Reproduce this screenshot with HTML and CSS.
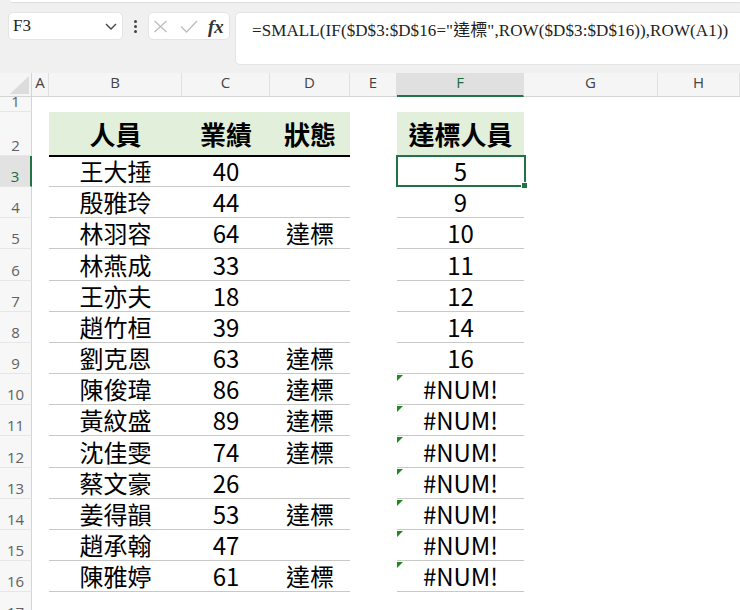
FILE: index.html
```html
<!DOCTYPE html>
<html lang="zh-Hant">
<head>
<meta charset="utf-8">
<title>Sheet</title>
<link rel="stylesheet" href="styles.css">
</head>
<body>
<div class="toolbar">
  <div class="ribbon-edge"></div>
  <div class="bar">
    <div class="namebox">
      <span class="ref">F3</span>
      <svg class="chev" width="12" height="7" viewBox="0 0 12 7"><path d="M1 1l5 5 5-5" fill="none" stroke="#444" stroke-width="1.4"/></svg>
    </div>
    <div class="dots"><i></i><i></i><i></i></div>
    <div class="fxbox">
      <svg width="15" height="13" viewBox="0 0 15 13"><path d="M1.5 1l12 11M13.5 1l-12 11" fill="none" stroke="#bdbdbd" stroke-width="1.3"/></svg>
      <svg width="18" height="13" viewBox="0 0 18 13"><path d="M1 6.5l5.5 5.5L17 1" fill="none" stroke="#bdbdbd" stroke-width="1.3"/></svg>
      <span class="fx">fx</span>
    </div>
    <div class="formula">=SMALL(IF($D$3:$D$16="達標",ROW($D$3:$D$16)),ROW(A1))</div>
  </div>
</div>
<div class="sheet">
  <div class="corner"><svg width="19" height="18" viewBox="0 0 19 18"><polygon points="19,0 19,18 0,18" fill="#dcdcdc"/></svg></div>
  <div class="ch">A</div><div class="ch">B</div><div class="ch">C</div><div class="ch">D</div><div class="ch">E</div><div class="ch on">F</div><div class="ch">G</div><div class="ch">H</div>

  <div class="rh">1</div><div class="c"></div><div class="c"></div><div class="c"></div><div class="c"></div><div class="c"></div><div class="c"></div><div class="c"></div><div class="c"></div>

  <div class="rh">2</div><div class="c"></div><div class="c hd line">人員</div><div class="c hd line">業績</div><div class="c hd line">狀態</div><div class="c"></div><div class="c hd">達標人員</div><div class="c"></div><div class="c"></div>

  <div class="rh on">3</div><div class="c"></div><div class="c dt">王大捶</div><div class="c dt">40</div><div class="c dt"></div><div class="c"></div><div class="c dt sel">5</div><div class="c"></div><div class="c"></div>
  <div class="rh">4</div><div class="c"></div><div class="c dt">殷雅玲</div><div class="c dt">44</div><div class="c dt"></div><div class="c"></div><div class="c dt">9</div><div class="c"></div><div class="c"></div>
  <div class="rh">5</div><div class="c"></div><div class="c dt">林羽容</div><div class="c dt">64</div><div class="c dt">達標</div><div class="c"></div><div class="c dt">10</div><div class="c"></div><div class="c"></div>
  <div class="rh">6</div><div class="c"></div><div class="c dt">林燕成</div><div class="c dt">33</div><div class="c dt"></div><div class="c"></div><div class="c dt">11</div><div class="c"></div><div class="c"></div>
  <div class="rh">7</div><div class="c"></div><div class="c dt">王亦夫</div><div class="c dt">18</div><div class="c dt"></div><div class="c"></div><div class="c dt">12</div><div class="c"></div><div class="c"></div>
  <div class="rh">8</div><div class="c"></div><div class="c dt">趙竹桓</div><div class="c dt">39</div><div class="c dt"></div><div class="c"></div><div class="c dt">14</div><div class="c"></div><div class="c"></div>
  <div class="rh">9</div><div class="c"></div><div class="c dt">劉克恩</div><div class="c dt">63</div><div class="c dt">達標</div><div class="c"></div><div class="c dt">16</div><div class="c"></div><div class="c"></div>
  <div class="rh">10</div><div class="c"></div><div class="c dt">陳俊瑋</div><div class="c dt">86</div><div class="c dt">達標</div><div class="c"></div><div class="c dt err">#NUM!</div><div class="c"></div><div class="c"></div>
  <div class="rh">11</div><div class="c"></div><div class="c dt">黃紋盛</div><div class="c dt">89</div><div class="c dt">達標</div><div class="c"></div><div class="c dt err">#NUM!</div><div class="c"></div><div class="c"></div>
  <div class="rh">12</div><div class="c"></div><div class="c dt">沈佳雯</div><div class="c dt">74</div><div class="c dt">達標</div><div class="c"></div><div class="c dt err">#NUM!</div><div class="c"></div><div class="c"></div>
  <div class="rh">13</div><div class="c"></div><div class="c dt">蔡文豪</div><div class="c dt">26</div><div class="c dt"></div><div class="c"></div><div class="c dt err">#NUM!</div><div class="c"></div><div class="c"></div>
  <div class="rh">14</div><div class="c"></div><div class="c dt">姜得韻</div><div class="c dt">53</div><div class="c dt">達標</div><div class="c"></div><div class="c dt err">#NUM!</div><div class="c"></div><div class="c"></div>
  <div class="rh">15</div><div class="c"></div><div class="c dt">趙承翰</div><div class="c dt">47</div><div class="c dt"></div><div class="c"></div><div class="c dt err">#NUM!</div><div class="c"></div><div class="c"></div>
  <div class="rh">16</div><div class="c"></div><div class="c dt">陳雅婷</div><div class="c dt">61</div><div class="c dt">達標</div><div class="c"></div><div class="c dt err">#NUM!</div><div class="c"></div><div class="c"></div>
  <div class="rh">17</div><div class="c"></div><div class="c"></div><div class="c"></div><div class="c"></div><div class="c"></div><div class="c"></div><div class="c"></div><div class="c"></div>
</div>
</body>
</html>
```

FILE: styles.css
```css
html, body {
  margin: 0;
  padding: 0;
}
body {
  width: 740px;
  height: 610px;
  overflow: hidden;
  background: #f0f0f0;
  font-family: "Noto Sans CJK TC", "Noto Sans", sans-serif;
}

/* ---------- formula bar ---------- */
.toolbar {
  height: 73px;
  background: #f0f0f0;
  display: flex;
  flex-direction: column;
}
.ribbon-edge {
  height: 2px;
  margin-left: 10px;
  background: #fff;
  border-bottom-left-radius: 4px;
  box-shadow: 0 1px 1px rgba(0, 0, 0, 0.08);
}
.bar {
  display: flex;
  align-items: flex-start;
  padding: 10px 0 0 8px;
}
.namebox {
  width: 115px;
  height: 28px;
  box-sizing: border-box;
  background: #fff;
  border: 1px solid #e4e4e4;
  border-radius: 5px;
  display: flex;
  align-items: center;
  justify-content: space-between;
  padding: 0 5px 0 4px;
  font: 17px "Liberation Serif", serif;
  color: #222;
}
.chev {
  margin-top: 1px;
}
.dots {
  width: 25px;
  display: flex;
  flex-direction: column;
  align-items: center;
  gap: 2px;
  padding-top: 8px;
}
.dots i {
  width: 3px;
  height: 3px;
  border-radius: 50%;
  background: #444;
}
.fxbox {
  width: 82px;
  height: 28px;
  box-sizing: border-box;
  background: #fff;
  border: 1px solid #e4e4e4;
  border-radius: 5px;
  display: flex;
  align-items: center;
  padding-left: 4px;
  gap: 12px;
}
.fx {
  margin-left: -2px;
  font: italic 700 19px "Liberation Serif", serif;
  color: #333;
  line-height: 1;
}
.formula {
  flex: 1;
  margin-left: 5px;
  margin-right: -12px;
  height: 53px;
  box-sizing: border-box;
  background: #fff;
  border: 1px solid #e4e4e4;
  border-radius: 5px;
  padding: 3px 0 0 16px;
  font: 17px "Liberation Serif", "Noto Sans CJK TC", serif;
  letter-spacing: 0.1px;
  color: #222;
  white-space: nowrap;
}

/* ---------- sheet ---------- */
.sheet {
  display: grid;
  grid-template-columns: 32px 17px 133px 88px 80px 47px 127px 134px 1fr;
  grid-template-rows: 24px 15px 44px 31px 31px 31px 32px 31px 31px 31px 31px 31px 32px 31px 31px 31px 31px 31px;
  background: #fff;
}
.corner {
  background: #f5f5f5;
  border-right: 1px solid #d4d4d4;
  border-bottom: 1px solid #d4d4d4;
  box-sizing: border-box;
  display: flex;
  justify-content: flex-end;
  align-items: flex-end;
  padding: 0 2px 2px 0;
}
.ch {
  background: #f5f5f5;
  box-sizing: border-box;
  border-right: 1px solid #e0e0e0;
  border-bottom: 1px solid #d4d4d4;
  display: flex;
  justify-content: center;
  align-items: flex-start;
  padding-top: 2px;
  font: 15px/1 "Open Sans", sans-serif;
  color: #444;
}
.ch.on {
  background: #e0e0e0;
  color: #1e6b41;
  border-bottom: 2px solid #217346;
}
.rh {
  background: #f7f7f7;
  box-sizing: border-box;
  border-right: 1px solid #d4d4d4;
  border-bottom: 1px solid #e6e6e6;
  display: flex;
  justify-content: center;
  align-items: flex-end;
  padding-bottom: 2px;
  overflow: hidden;
  font: 15px/1 "Open Sans", sans-serif;
  color: #616161;
}
.rh.on {
  background: #e2e2e2;
  color: #1e6b41;
  border-right: 2px solid #217346;
}
.c {
  position: relative;
  box-sizing: border-box;
  display: flex;
  align-items: center;
  justify-content: center;
  font-size: 24px;
  line-height: 1;
  color: #000;
  white-space: nowrap;
}
.hd {
  background: #e2efda;
  font-weight: 700;
  font-size: 26px;
}
.line {
  border-bottom: 1px solid #000;
  box-shadow: 0 1px 0 #000;
}
.dt {
  border-bottom: 1px solid #c8c8c8;
}
.sel {
  z-index: 2;
}
.sel::after {
  content: "";
  position: absolute;
  left: -1px;
  top: -1px;
  right: -2px;
  bottom: -1px;
  border: 2px solid #217346;
}
.sel::before {
  content: "";
  position: absolute;
  right: -4px;
  bottom: -3px;
  width: 5px;
  height: 5px;
  background: #217346;
  border: 1px solid #fff;
  z-index: 1;
}
.err::before {
  content: "";
  position: absolute;
  left: 0;
  top: 1px;
  width: 0;
  height: 0;
  border-top: 6px solid #1e8a1e;
  border-right: 6px solid transparent;
}
```
